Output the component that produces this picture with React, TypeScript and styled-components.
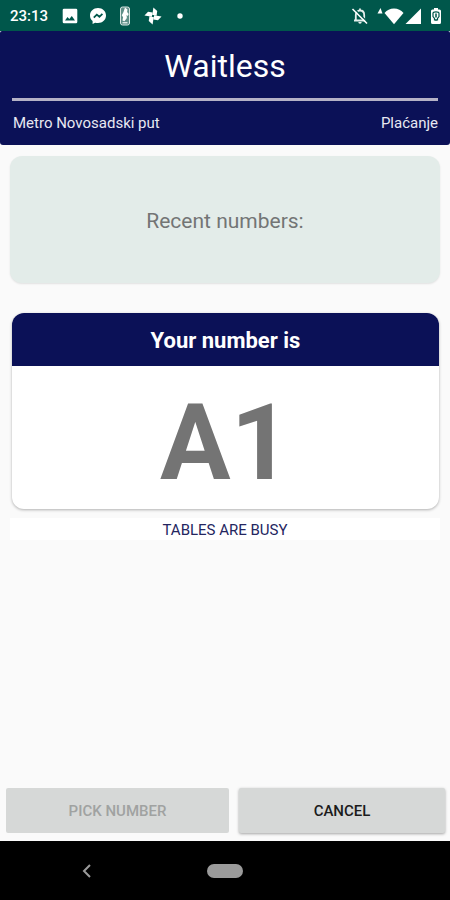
import React from "react";
import styled, { createGlobalStyle } from "styled-components";

const NAVY = "#0b1157";

const GlobalStyle = createGlobalStyle`
  *, *::before, *::after { box-sizing: border-box; }
  body {
    margin: 0;
    background: #fafafa;
    font-family: Roboto, "Noto Sans", sans-serif;
  }
  h1, h2, p { margin: 0; }
`;

const Screen = styled.div`
  display: flex;
  flex-direction: column;
  min-height: 100vh;
  background: #fafafa;
`;

const StatusBar = styled.div`
  display: flex;
  align-items: center;
  justify-content: space-between;
  height: 31px;
  padding: 0 8px 0 10px;
  background: #00574b;
  color: #fff;
`;

const StatusGroup = styled.div<{ $gap: number }>`
  display: flex;
  align-items: center;
  gap: ${({ $gap }) => $gap}px;
`;

const Clock = styled.time`
  margin-right: 3px;
  font-size: 15px;
  font-weight: 500;
  line-height: 20px;
`;

const Icon = styled.svg`
  display: block;
  flex: none;
`;

const Header = styled.header`
  padding: 12px 12px 11px;
  border-radius: 2px 2px 3px 3px;
  background: ${NAVY};
  color: #fff;
`;

const Title = styled.h1`
  padding-bottom: 8px;
  border-bottom: 3px solid #b5b2c6;
  font-size: 32px;
  font-weight: 400;
  line-height: 47px;
  text-align: center;
`;

const HeaderDetails = styled.div`
  display: flex;
  justify-content: space-between;
  padding: 12px 0 0 1px;
  color: #e8e8f2;
  font-size: 15px;
  line-height: 21px;
`;

const Content = styled.main`
  display: flex;
  flex: 1;
  flex-direction: column;
  padding: 11px 10px;
`;

const RecentCard = styled.section`
  display: flex;
  align-items: center;
  justify-content: center;
  min-height: 127px;
  padding-top: 2px;
  border-radius: 12px;
  background: #e3ece9;
  box-shadow: 0 1px 2px rgba(0, 0, 0, 0.1);
  color: #737575;
  font-size: 21px;
  line-height: 28px;
`;

const NumberCard = styled.section`
  margin: 30px 1px 0 2px;
  overflow: hidden;
  border-radius: 12px;
  background: #fff;
  box-shadow: 0 1px 3px rgba(0, 0, 0, 0.3);
  text-align: center;
`;

const NumberHeading = styled.h2`
  padding: 14px 12px 11px;
  background: ${NAVY};
  color: #fff;
  font-size: 22px;
  font-weight: 700;
  line-height: 28px;
`;

const TicketNumber = styled.p`
  padding: 16px 0 4px;
  color: #747474;
  font-size: 105px;
  font-weight: 700;
  line-height: 123px;
`;

const TableStatus = styled.p`
  margin-top: 9px;
  padding-top: 2px;
  background: #fff;
  color: #24265f;
  font-size: 15px;
  line-height: 20px;
  text-align: center;
`;

const Actions = styled.div`
  display: flex;
  gap: 10px;
  padding: 0 5px 8px 6px;
`;

const ActionButton = styled.button<{ $width: number }>`
  flex: ${({ $width }) => $width} 1 0;
  height: 45px;
  padding: 0;
  border: 0;
  border-radius: 2px;
  background: #d6d8d7;
  box-shadow: 0 1px 3px rgba(0, 0, 0, 0.35);
  color: #1b1b1b;
  font-family: inherit;
  font-size: 15px;
  font-weight: 500;

  &:disabled {
    box-shadow: none;
    color: #a0a2a1;
  }
`;

const SystemNav = styled.nav`
  display: grid;
  grid-template-columns: 1fr auto 1fr;
  align-items: center;
  height: 59px;
  background: #000;
`;

const NavButton = styled.button`
  display: block;
  justify-self: center;
  padding: 0;
  border: 0;
  background: none;
`;

const BackButton = styled(NavButton)`
  margin-right: 34px;
`;

const HomeButton = styled(NavButton)`
  width: 36px;
  height: 14px;
  border-radius: 7px;
  background: #9b9b9b;
`;

function NotificationIcons() {
  return (
    <>
      <Icon width="16" height="16" viewBox="0 0 16 16" aria-label="Picture">
        <path
          fill="#fff"
          fillRule="evenodd"
          d="M2 .7h12A1.300 1.300 0 0 1 15.300 2v12a1.300 1.300 0 0 1-1.300 1.300H2A1.300 1.300 0 0 1 .7 14V2A1.300 1.300 0 0 1 2 .7zM3 12.500h10L9.800 8 7.300 11 5.500 9z"
        />
      </Icon>
      <Icon width="18" height="18" viewBox="0 0 18 18" aria-label="Messenger">
        <path
          fill="#fff"
          d="M9 1C4.400 1 1 4.200 1 8.600c0 2.300 1 4.200 2.600 5.500V17l2.500-1.300c.9.300 1.900.4 2.900.4 4.600 0 8-3.200 8-7.500S13.600 1 9 1z"
        />
        <path fill="none" stroke="#00574b" strokeWidth="1.800" d="M4.800 10.600 7.800 7.600l2.600 2.200 3-3" />
      </Icon>
      <Icon width="14" height="20" viewBox="0 0 14 20" aria-label="Basketball">
        <rect x="2.500" y="1" width="9" height="18" rx="2" fill="#5f8f88" stroke="#dbe7e4" />
        <path fill="#fff" d="m7 1.500 2.500 2-.4 2.500 1.600 2-.8 2-1.400-1 .4 3-2.400 3.200-2-.6.6-3.400-1.300-2 1.600-3z" />
        <path stroke="#dbe7e4" strokeWidth="1.500" d="M4.500 16.700h5" />
      </Icon>
      <Icon width="20" height="20" viewBox="0 0 20 20" aria-label="Pinwheel">
        <g fill="#fff" transform="rotate(8 10 10)">
          <path d="M9.200 9.200V1.500L13.500 4.500V9.200z" />
          <path d="M10.800 9.200h7.700l-3 4.300h-4.700z" />
          <path d="M10.800 10.800v7.700l-4.300-3v-4.700z" />
          <path d="M9.200 10.800H1.500l3-4.300h4.700z" />
        </g>
        <circle cx="10" cy="10" r="1" fill="#00574b" />
      </Icon>
      <Icon width="12" height="10" viewBox="0 0 12 10" aria-hidden="true">
        <circle cx="6" cy="5" r="2.700" fill="#fff" />
      </Icon>
    </>
  );
}

function DeviceIcons() {
  return (
    <>
      <Icon width="18" height="18" viewBox="0 0 18 18" aria-label="Notifications muted">
        <path
          fill="none"
          stroke="#e6efed"
          strokeWidth="1.800"
          d="M4.800 13.300V8c0-2.600 1.600-4.500 4.200-4.500s4.200 1.900 4.200 4.500v5.300M3 13.500h12M9 1.500v2"
        />
        <path fill="#e6efed" d="M7.300 15h3.400a1.700 1.700 0 0 1-3.400 0z" />
        <path stroke="#00574b" strokeWidth="1.300" d="M3 1.500 17 15.500" />
        <path stroke="#fff" strokeWidth="1.600" d="M1.500 2 16 16.500" />
      </Icon>
      <StatusGroup $gap={1}>
        <Icon width="27" height="18" viewBox="0 0 27 18" aria-label="Wi-Fi">
          <path fill="#fff" d="M.5 6.500 3.500 1 5.500 6.500z" />
          <path fill="#fff" d="M7.500 6C10 3 13 1.500 17 1.500s7 1.500 9.500 4.500L17 17.300z" />
        </Icon>
        <Icon width="17" height="18" viewBox="0 0 17 18" aria-label="Signal">
          <path fill="#fff" d="M16 1.500V17H.5z" />
        </Icon>
      </StatusGroup>
      <Icon width="12" height="18" viewBox="0 0 12 18" aria-label="Battery">
        <path
          fill="#fff"
          d="M4 1h4v1.500h1.500A1.500 1.500 0 0 1 11 4v11.500A1.500 1.500 0 0 1 9.500 17h-7A1.500 1.500 0 0 1 1 15.500V4a1.500 1.500 0 0 1 1.500-1.500H4z"
        />
        <path fill="none" stroke="#00574b" strokeWidth="1.200" d="M4.500 13.500v-2L3 9.500V6.300c0-2 6-2 6 0v3.200l-1.500 2v2" />
        <path stroke="#00574b" strokeWidth="1.500" d="M6 6.500v4M6 12v2" />
      </Icon>
    </>
  );
}

export default function App() {
  return (
    <Screen>
      <GlobalStyle />
      <StatusBar>
        <StatusGroup $gap={11}>
          <Clock>23:13</Clock>
          <NotificationIcons />
        </StatusGroup>
        <StatusGroup $gap={8}>
          <DeviceIcons />
        </StatusGroup>
      </StatusBar>
      <Header>
        <Title>Waitless</Title>
        <HeaderDetails>
          <span>Metro Novosadski put</span>
          <span>Plaćanje</span>
        </HeaderDetails>
      </Header>
      <Content>
        <RecentCard>Recent numbers:</RecentCard>
        <NumberCard>
          <NumberHeading>Your number is</NumberHeading>
          <TicketNumber>A1</TicketNumber>
        </NumberCard>
        <TableStatus>TABLES ARE BUSY</TableStatus>
      </Content>
      <Actions>
        <ActionButton type="button" $width={223} disabled>
          PICK NUMBER
        </ActionButton>
        <ActionButton type="button" $width={206}>
          CANCEL
        </ActionButton>
      </Actions>
      <SystemNav aria-label="System navigation">
        <BackButton type="button" aria-label="Back">
          <Icon width="10" height="14" viewBox="0 0 10 14">
            <path fill="none" stroke="#9b9b9b" strokeWidth="2" d="M8 1 2 7l6 6" />
          </Icon>
        </BackButton>
        <HomeButton type="button" aria-label="Home" />
      </SystemNav>
    </Screen>
  );
}
